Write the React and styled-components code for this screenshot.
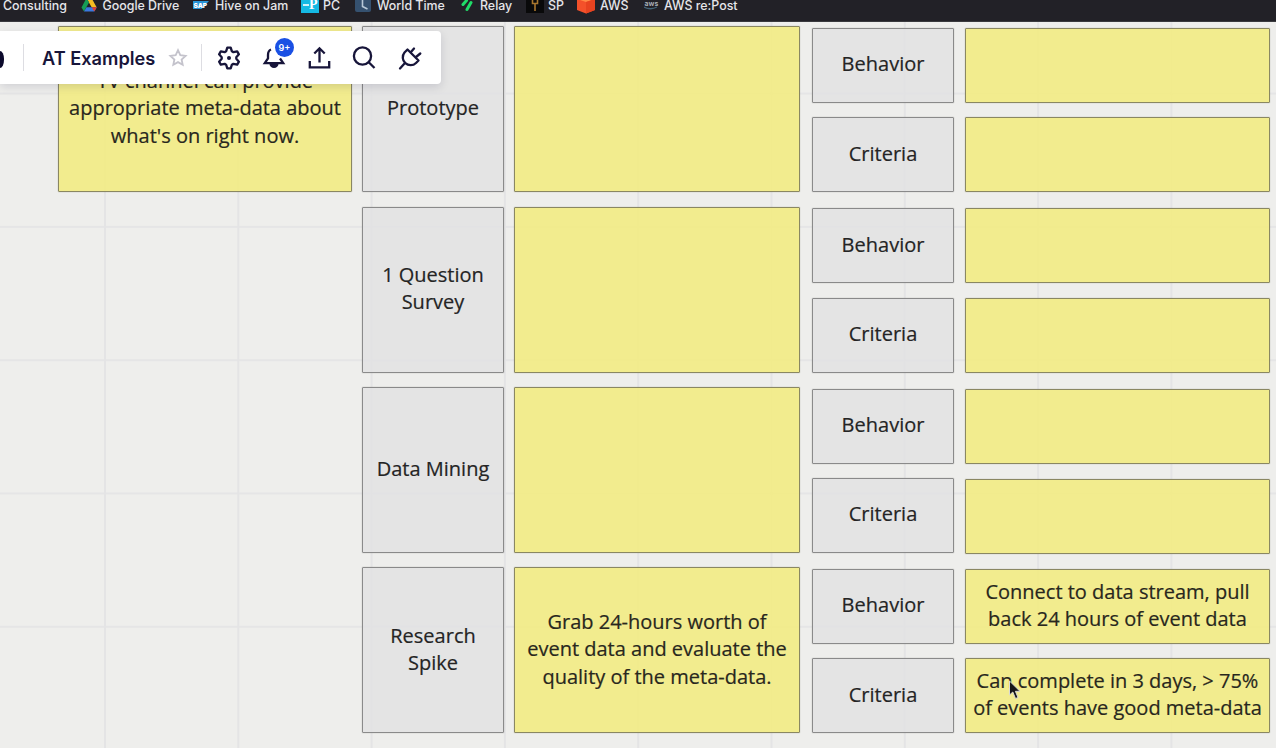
import React from "react";
import styled, { createGlobalStyle } from "styled-components";

const GlobalStyle = createGlobalStyle`
  * { box-sizing: border-box; }
  body { margin: 0; overflow: hidden; }
`;

const Page = styled.div`
  position: relative;
  display: flex;
  flex-direction: column;
  width: 1276px;
  height: 748px;
  overflow: hidden;
  background: #eeeeec;
`;

const BookmarksBar = styled.nav`
  display: flex;
  flex: none;
  height: 21.5px;
  overflow: hidden;
  background: #222127;
  border-bottom: 1px solid #3a3a3e;
  font: 500 12.4px/14px Inter, sans-serif;
  color: #e6e6ea;
`;

const Bookmark = styled.div`
  display: flex;
  flex: none;
  width: ${(p) => p.$width}px;
  height: 14px;
  margin-top: -1px;
  white-space: nowrap;
`;

const BookmarkIcon = styled.svg`
  flex: none;
  width: ${(p) => p.$slot}px;
  height: 16px;
  margin-top: -1px;
`;

const Canvas = styled.main`
  display: flex;
  flex: 1;
  align-items: flex-start;
  gap: 10px;
  padding: 4.8px 0 0 58px;
  background-image:
    linear-gradient(to right, #e4e4e5 1.5px, transparent 1.5px),
    linear-gradient(to bottom, #e5e5e6 1.5px, transparent 1.5px);
  background-size: 133.3px 133.3px;
  background-position: 104px 70.6px;
`;

const Tests = styled.div`
  display: flex;
  flex-direction: column;
  gap: 14.4px;
`;

const TestRow = styled.section`
  display: flex;
  height: 166px;
`;

const Stack = styled.div`
  display: flex;
  flex-direction: column;
  gap: 14.4px;
  padding-top: 1.6px;
  margin-left: ${(p) => p.$gap}px;
`;

const Card = styled.div`
  display: flex;
  flex: none;
  align-items: center;
  justify-content: center;
  width: ${(p) => p.$width}px;
  height: ${(p) => p.$height || 166}px;
  margin-left: ${(p) => p.$gap || 0}px;
  margin-top: ${(p) => p.$drop || 0}px;
  padding-bottom: 3px;
  border: 1px solid ${(p) => (p.$note ? "#8a8762" : "#8a8a8a")};
  border-radius: 1px;
  box-shadow: 0 0 1px rgba(70, 70, 60, 0.6);
  background: ${(p) => (p.$note ? "rgba(242, 236, 134, 0.92)" : "rgba(226, 226, 227, 0.85)")};
  color: ${(p) => (p.$note ? "#28271d" : "#242424")};
  font: 400 20px/27.4px "Open Sans", sans-serif;
  -webkit-text-stroke: 0.2px currentColor;
  text-align: center;
  white-space: pre;
`;

const Toolbar = styled.header`
  position: absolute;
  left: 0;
  top: 31px;
  display: flex;
  align-items: center;
  width: 441px;
  height: 53px;
  border-radius: 0 4px 4px 0;
  background: #fff;
  box-shadow: 0 3px 10px rgba(5, 0, 56, 0.13);
`;

const LogoEdge = styled.div`
  width: 4px;
  height: 17px;
  margin-top: 4px;
  border-radius: 0 4px 4px 0 / 0 8px 8px 0;
  background: #0c0a2c;
`;

const Divider = styled.div`
  width: 1px;
  height: 27px;
  margin-left: ${(p) => p.$gap}px;
  background: #dddde2;
`;

const BoardTitle = styled.h1`
  width: 113px;
  margin: 0 0 0 18px;
  font: 600 18.2px/24px Inter, sans-serif;
  color: #17153a;
  white-space: nowrap;
`;

const ToolIcon = styled.svg`
  flex: none;
  width: 24px;
  height: 24px;
  margin-left: ${(p) => p.$gap}px;
  overflow: visible;
  fill: none;
  stroke: ${(p) => p.$color || "#17153a"};
  stroke-width: ${(p) => p.$weight || 2.3};
`;

const BellWrap = styled.div`
  position: relative;
  display: flex;
  margin-left: 21px;
`;

const Badge = styled.span`
  position: absolute;
  left: 13px;
  top: -7.5px;
  width: 19px;
  height: 19px;
  border-radius: 50%;
  background: #1a50e4;
  color: #fff;
  font: 600 9px/19px Inter, sans-serif;
  text-align: center;
`;

const Pointer = styled.svg`
  position: absolute;
  left: 1008px;
  top: 680px;
  width: 13px;
  height: 20px;
`;

const bookmarks = [
  { text: "Consulting", slot: 3, width: 81, icon: null },
  {
    text: "Google Drive", slot: 21.5, width: 112,
    icon: (
      <>
        <path d="M5.5 0h5l5 9h-5z" fill="#f6bd22" />
        <path d="M5.5 0L0.5 9.5 3 13.5 8 4.5z" fill="#169c56" />
        <path d="M5.5 9.3h10.3l-2.5 4.3H3z" fill="#3a78df" />
        <path d="M10.7 9.3h5.1l-2.5 4.3z" fill="#e2412f" />
      </>
    ),
  },
  {
    text: "Hive on Jam", slot: 22, width: 108,
    icon: (
      <>
        <path d="M0 3h16L8.500 11H0z" fill="#2794d8" />
        <text x="0.500" y="9.500" fontSize="6.500" fontWeight="900" fontFamily="Inter" fill="#fff">SAP</text>
      </>
    ),
  },
  {
    text: "PC", slot: 22, width: 54,
    icon: (
      <>
        <path d="M0 0h18v15H0z" fill="#15b9e3" />
        <text x="8" y="11" fontSize="14" fontWeight="700" fontFamily="Liberation Serif" fill="#fff">P</text>
        <path d="M2 7h6" stroke="#fff" strokeWidth="1.600" />
      </>
    ),
  },
  {
    text: "World Time", slot: 22, width: 106,
    icon: (
      <>
        <rect y="-3" width="16" height="17" rx="2" fill="#35516f" />
        <path d="M7.500 1v7.500l5 2.500" fill="none" stroke="#b7c8d7" strokeWidth="1.600" />
      </>
    ),
  },
  {
    text: "Relay", slot: 19, width: 65,
    icon: (
      <g stroke="#20dc68" strokeWidth="3" strokeLinecap="round">
        <path d="M2 6.500l3.500-4M6 11.500l4-7" />
      </g>
    ),
  },
  {
    text: "SP", slot: 22, width: 51,
    icon: (
      <>
        <path d="M0 0h18v15H0z" fill="#09090a" />
        <path d="M6.500 2v3.500h5V2M9 5v8" fill="none" stroke="#a8762d" strokeWidth="1.600" />
      </>
    ),
  },
  {
    text: "AWS", slot: 23, width: 67,
    icon: (
      <>
        <path d="M0 1l9-3 9 3v11l-9 3.500L0 12z" fill="#f4512a" />
        <path d="M0 1l9 3 9-3-9-3z" fill="#ff8a45" />
        <path d="M9 4l9-3v11l-9 3.500z" fill="#e84320" />
      </>
    ),
  },
  {
    text: "AWS re:Post", slot: 20, width: 100,
    icon: (
      <>
        <text x="0.500" y="8" fontSize="7" fontWeight="600" fontFamily="Inter" fill="#aeb5bd">aws</text>
        <path d="M0 9q6.500 3.500 13 0" fill="none" stroke="#456579" strokeWidth="1.300" />
      </>
    ),
  },
];

const tests = [
  { name: "Prototype" },
  { name: "1 Question\nSurvey" },
  { name: "Data Mining", drop: 1.4 },
  {
    name: "Research\nSpike",
    plan: "Grab 24-hours worth of\nevent data and evaluate the\nquality of the meta-data.",
    behavior: "Connect to data stream, pull\nback 24 hours of event data",
    criteria: "Can complete in 3 days, > 75%\nof events have good meta-data",
  },
];

export default function App() {
  return (
    <Page>
      <GlobalStyle />
      <BookmarksBar>
        {bookmarks.map((b) => (
          <Bookmark key={b.text} $width={b.width}>
            <BookmarkIcon $slot={b.slot}>{b.icon}</BookmarkIcon>
            {b.text}
          </Bookmark>
        ))}
      </BookmarksBar>

      <Canvas>
        <Card $note $width={294}>{"\nTV channel can provide\nappropriate meta-data about\nwhat's on right now.\n "}</Card>
        <Tests>
          {tests.map((t) => (
            <TestRow key={t.name}>
              <Card $width={142}>{t.name}</Card>
              <Card $note $width={286} $gap={10}>{t.plan}</Card>
              <Stack $gap={12}>
                <Card $width={142} $height={75}>Behavior</Card>
                <Card $width={142} $height={75}>Criteria</Card>
              </Stack>
              <Stack $gap={11}>
                <Card $note $width={305} $height={75}>{t.behavior}</Card>
                <Card $note $width={305} $height={75} $drop={t.drop}>{t.criteria}</Card>
              </Stack>
            </TestRow>
          ))}
        </Tests>
      </Canvas>

      <Toolbar>
        <LogoEdge />
        <Divider $gap={19} />
        <BoardTitle>AT Examples</BoardTitle>
        <ToolIcon $gap={11} $color="#c4c3cc" $weight={1.8} viewBox="0 0 24 24">
          <path d="M12 4.200l2.300 5 5.300.6-4 3.700 1.100 5.300L12 16.100l-4.700 2.700 1.100-5.300-4-3.700 5.300-.6z" />
        </ToolIcon>
        <Divider $gap={11} />
        <ToolIcon $gap={15} viewBox="0 0 24 24">
          <path strokeLinejoin="round" d="M10.300 1.600h3.400l1.200 3.700 1.500.9 3.800-.8 1.700 2.900-2.600 2.900v1.600l2.600 2.900-1.700 2.900-3.800-.8-1.500.9-1.200 3.700h-3.400l-1.200-3.700-1.500-.9-3.800.8-1.700-2.900 2.600-2.900v-1.600L2.100 8.300l1.700-2.900 3.800.8 1.500-.9z" />
          <circle cx="12" cy="12" r="2" fill="#17153a" stroke="none" />
        </ToolIcon>
        <BellWrap>
          <ToolIcon $gap={0} viewBox="0 0 24 24">
            <path d="M9 3.500C6.500 4.500 6 6.500 6 9v3.500L2.800 17.200h18.400L18 12.500" />
            <path d="M7.500 18h9a4.500 4 0 0 1-9 0z" fill="#17153a" stroke="none" />
          </ToolIcon>
          <Badge>9+</Badge>
        </BellWrap>
        <ToolIcon $gap={21} viewBox="0 0 24 24">
          <path d="M2.800 15v6.300h19.400V15M12.500 16.500V2.500M7.300 7.500l5.200-5.200 5.200 5.200" />
        </ToolIcon>
        <ToolIcon $gap={21} viewBox="0 0 24 24">
          <circle cx="10.500" cy="10" r="8.600" />
          <path d="M16.500 16l6 6" />
        </ToolIcon>
        <ToolIcon $gap={22} viewBox="0 0 24 24" strokeLinejoin="round" strokeLinecap="round">
          <path d="M9.500 3.500L20.500 14.500 18 17A7.800 7.800 0 0 1 6.500 6.500zM13 6l3-3.500M18 11l4.300-3.500M6.500 17.500L2 22.500" />
        </ToolIcon>
      </Toolbar>

      <Pointer viewBox="0 0 13 20">
        <path d="M1.500 1v14l3.300-3 2.700 6.500 2.500-1-2.600-6.200H12z" fill="#171719" stroke="#d8d8d4" strokeWidth="1" />
      </Pointer>
    </Page>
  );
}
